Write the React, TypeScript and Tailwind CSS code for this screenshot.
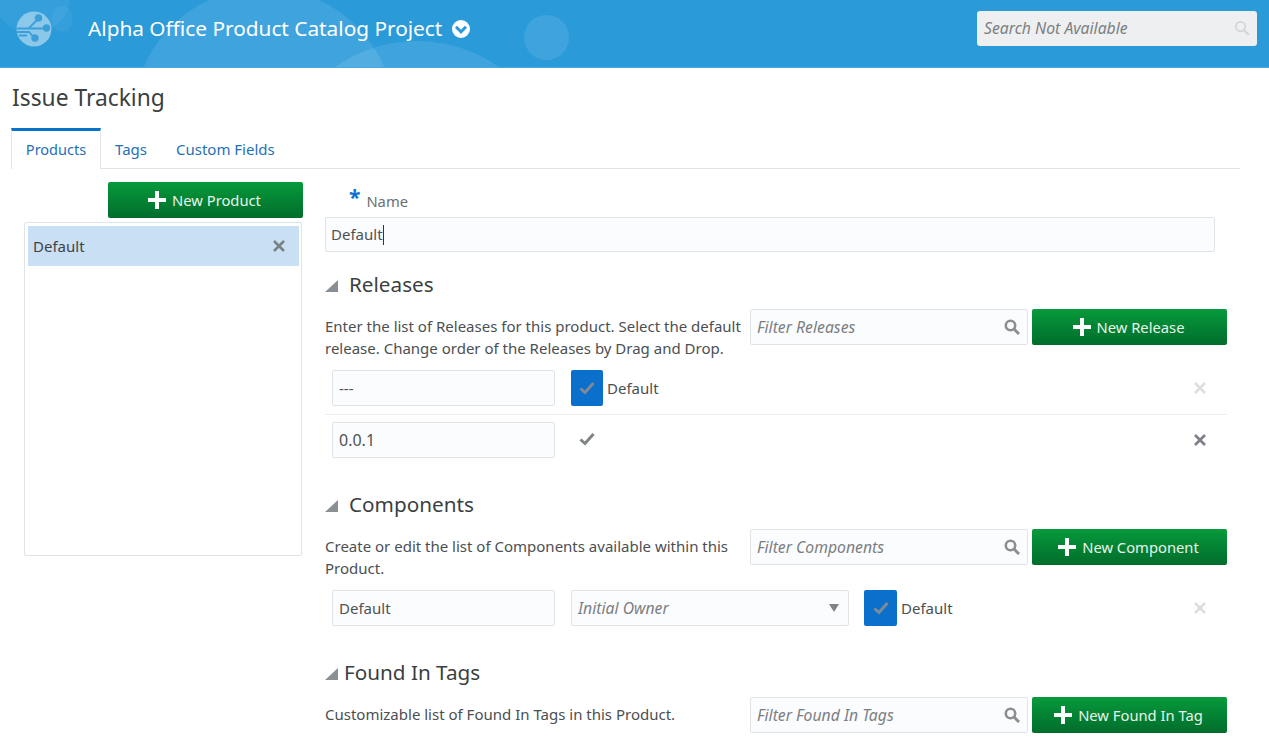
import React from "react";

const Plus = ({ s = 18 }: { s?: number }) => (
  <svg width={s} height={s} viewBox="0 0 18 18" className="shrink-0"><path d="M7 0h4v7h7v4h-7v7H7v-7H0V7h7z" fill="#fff" /></svg>
);
const Cross = ({ c = "#7a8086" }: { c?: string }) => (
  <svg width="12" height="12" viewBox="0 0 12 12"><path d="M1 1l10 10M11 1L1 11" stroke={c} strokeWidth="2.6" /></svg>
);
const Check = ({ c = "#7f8487" }: { c?: string }) => (
  <svg width="16" height="14" viewBox="0 0 16 14"><path d="M1.5 7.5l4.5 4L14.5 2" fill="none" stroke={c} strokeWidth="3" /></svg>
);
const Search = ({ c = "#8b8f93", w = 2.6 }: { c?: string; w?: number }) => (
  <svg width="16" height="16" viewBox="0 0 16 16" fill="none"><circle cx="6.5" cy="6.5" r="4.7" stroke={c} strokeWidth={w} /><path d="M10 10l5 5" stroke={c} strokeWidth={w + 0.4} /></svg>
);
const Tri = ({ s = 13 }: { s?: number }) => (
  <svg width={s} height={s} viewBox="0 0 13 13" className="shrink-0"><path d="M13 1v12H0z" fill="#8a8f93" /></svg>
);

const inputCls = "h-[36px] flex items-center rounded-[2px] border border-[#dfe4e9] bg-[#fbfcfe] text-[15px] text-[#4f5254] px-[6px]";
const italicCls = "italic text-[15.75px] text-[#7c7f82] pt-[1px]";

const Green = ({ label }: { label: string }) => (
  <button className="w-[195px] h-[36px] rounded-[2px] pr-[2px] flex items-center justify-center gap-[6px] bg-gradient-to-b from-[#079a3b] to-[#016d2c] text-[14.75px] text-[#e8f4ea]">
    <Plus />
    {label}
  </button>
);

const Filter = ({ label }: { label: string }) => (
  <div className={`${inputCls} w-[278px] justify-between pr-[7px]`}>
    <span className={italicCls}>{label}</span>
    <Search />
  </div>
);

const Heading = ({ children, gap = "gap-[11px]", tri = 13 }: { children: string; gap?: string; tri?: number }) => (
  <div className={`flex items-center h-[28px] text-[20.7px] text-[#3b3f42] ${gap}`}>
    <Tri s={tri} />
    {children}
  </div>
);

const Toolbar = ({ text, filter, btn }: { text: React.ReactNode; filter: string; btn: string }) => (
  <div className="flex items-start h-[36px] mt-[10px]">
    <p className="w-[425px] text-[15px] leading-[22px] text-[#4b4f52] pt-[6px]">{text}</p>
    <Filter label={filter} />
    <div className="ml-[4px]"><Green label={btn} /></div>
  </div>
);

const Box = ({ on, narrow }: { on?: boolean; narrow?: boolean }) => (
  <div className={`${narrow ? "w-[32px]" : "w-[33px]"} h-[36px] flex items-center justify-center ${on ? "rounded-[2px] bg-[#0b6fcc]" : ""}`}>
    <Check c={on ? "#7f8a94" : "#7f8487"} />
  </div>
);

export default function App() {
  return (
    <div className="w-[1269px] h-[754px] overflow-hidden bg-white" style={{ fontFamily: '"Noto Sans", sans-serif' }}>
      <header className="relative h-[68px] bg-[#2a9ad9] border-b border-[#4aa9e0] overflow-hidden flex items-center pl-[16px] pr-[12px]">
        <div className="absolute left-[133px] top-[-12px] w-[262px] h-[262px] rounded-full bg-white/10" />
        <div className="absolute left-[275px] top-[41px] w-[284px] h-[284px] rounded-full bg-white/10" />
        <div className="absolute left-[524px] top-[15px] w-[45px] h-[45px] rounded-full bg-white/10" />
        <div className="absolute left-[-6px] top-[-38px] w-[76px] h-[70px] rounded-full bg-white/5" />
        <div className="absolute left-[52px] top-[6px] w-[20px] h-[26px] rounded-full bg-white/5" />
        <svg width="36" height="36" viewBox="0 0 36 36" className="relative shrink-0 mb-[10px]">
          <circle cx="18" cy="18" r="17.5" fill="#8cc8ea" />
          <g stroke="#3b9fd9" strokeWidth="1.8" fill="none">
            <path d="M0.5 17.5h12l10-10M12.5 17.5h18M1 21h12l5.5 6M3 24.5h8" />
            <circle cx="22.5" cy="7" r="2.8" fill="#3b9fd9" />
            <circle cx="30.5" cy="17" r="2.8" fill="#3b9fd9" />
            <circle cx="19" cy="27" r="2.8" fill="#3b9fd9" />
          </g>
        </svg>
        <h1 className="relative ml-[36px] text-[20.8px] text-white mb-[10px]">Alpha Office Product Catalog Project</h1>
        <svg width="18" height="18" viewBox="0 0 18 18" className="relative ml-[10px] mb-[10px]">
          <circle cx="9" cy="9" r="9" fill="#fff" />
          <path d="M4 6.8l5 5 5-5" fill="none" stroke="#2a9ad9" strokeWidth="3" />
        </svg>
        <div className="relative ml-auto mb-[11px] w-[280px] h-[35px] rounded-[3px] bg-[#eeeff1] flex items-center justify-between pl-[7px] pr-[7px]">
          <span className={`${italicCls} pt-[2px]`}>Search Not Available</span>
          <Search c="#d4d6d8" w={1.8} />
        </div>
      </header>

      <main className="pl-[11px] pr-[29px]">
        <h2 className="mt-[14px] h-[32px] pl-px flex items-center text-[22.8px] text-[#3b3f42]">Issue Tracking</h2>
        <nav className="mt-[14px] h-[41px] flex items-stretch border-b border-[#dfe4e9] text-[15px] text-[#1f70b8]">
          <div className="w-[90px] -mb-px flex items-center justify-center bg-white border-t-[3px] border-t-[#0572ce] border-x border-x-[#dfe4e9] text-[14.5px]">Products</div>
          <div className="ml-[14px] pt-[3px] flex items-center">Tags</div>
          <div className="ml-[29px] pt-[3px] flex items-center">Custom Fields</div>
        </nav>

        <div className="flex mt-[13px]">
          <aside className="w-[279px] ml-[13px] shrink-0">
            <div className="ml-[84px] w-[195px] h-[36px] rounded-[2px] pr-[2px] flex items-center justify-center gap-[6px] bg-gradient-to-b from-[#079a3b] to-[#016d2c] text-[14.75px] text-[#e8f4ea]">
              <Plus /> New Product
            </div>
            <div className="mt-[4px] w-[278px] h-[334px] border border-[#dfe4e9] rounded-[2px] pt-[3px] pl-[3px] pr-[2px]">
              <div className="h-[40px] bg-[#c9e0f4] flex items-center justify-between pl-[5px] pr-[14px] text-[15px] text-[#3f4346]">
                Default <Cross />
              </div>
            </div>
          </aside>

          <section className="ml-[22px] w-[902px]">
            <div className="flex h-[30px] pl-[24px] items-center text-[14.75px] text-[#6b6f72]">
              <span className="text-[#0b6fcc] text-[21px] font-bold leading-none">*</span>
              <span className="ml-[6px] mt-[9px]">Name</span>
            </div>
            <div className={`${inputCls} !h-[35px] !pl-[5px] mt-[5px] w-[890px] text-[#3b3f42]`}>
              Default<span className="w-px h-[20px] bg-[#333]" />
            </div>

            <div className="mt-[19px]"><Heading>Releases</Heading></div>
            <Toolbar text={<>Enter the list of Releases for this product. Select the default release. Change order of the Releases by Drag and Drop.</>} filter="Filter Releases" btn="New Release" />
            <div className="mt-[25px] h-[45px] border-b border-[#eceef0] flex items-start pl-[7px]">
              <div className={`${inputCls} w-[223px]`}>---</div>
              <div className="ml-[16px]"><Box on narrow /></div>
              <span className="ml-[4px] h-[36px] flex items-center text-[15px] text-[#4b4f52]">Default</span>
              <span className="ml-auto mr-[21px] h-[36px] flex items-center"><Cross c="#dcdedf" /></span>
            </div>
            <div className="mt-[7px] flex items-start pl-[7px]">
              <div className={`${inputCls} w-[223px] !text-[16px]`}>0.0.1</div>
              <div className="ml-[16px] -mt-[1px]"><Box narrow /></div>
              <span className="ml-auto mr-[21px] h-[36px] flex items-center"><Cross /></span>
            </div>

            <div className="mt-[33px]"><Heading>Components</Heading></div>
            <Toolbar text={<>Create or edit the list of Components available within this Product.</>} filter="Filter Components" btn="New Component" />
            <div className="mt-[25px] flex items-start pl-[7px]">
              <div className={`${inputCls} w-[223px]`}>Default</div>
              <div className={`${inputCls} ml-[16px] w-[278px] justify-between pr-[9px]`}>
                <span className={italicCls}>Initial Owner</span>
                <svg width="10" height="8" viewBox="0 0 10 8"><path d="M0 0h10L5 8z" fill="#7f8487" /></svg>
              </div>
              <div className="ml-[15px]"><Box on /></div>
              <span className="ml-[4px] h-[36px] flex items-center text-[15px] text-[#4b4f52]">Default</span>
              <span className="ml-auto mr-[21px] h-[36px] flex items-center"><Cross c="#dcdedf" /></span>
            </div>

            <div className="mt-[33px]"><Heading gap="gap-[6px]">Found In Tags</Heading></div>
            <Toolbar text="Customizable list of Found In Tags in this Product." filter="Filter Found In Tags" btn="New Found In Tag" />
          </section>
        </div>
      </main>
    </div>
  );
}
